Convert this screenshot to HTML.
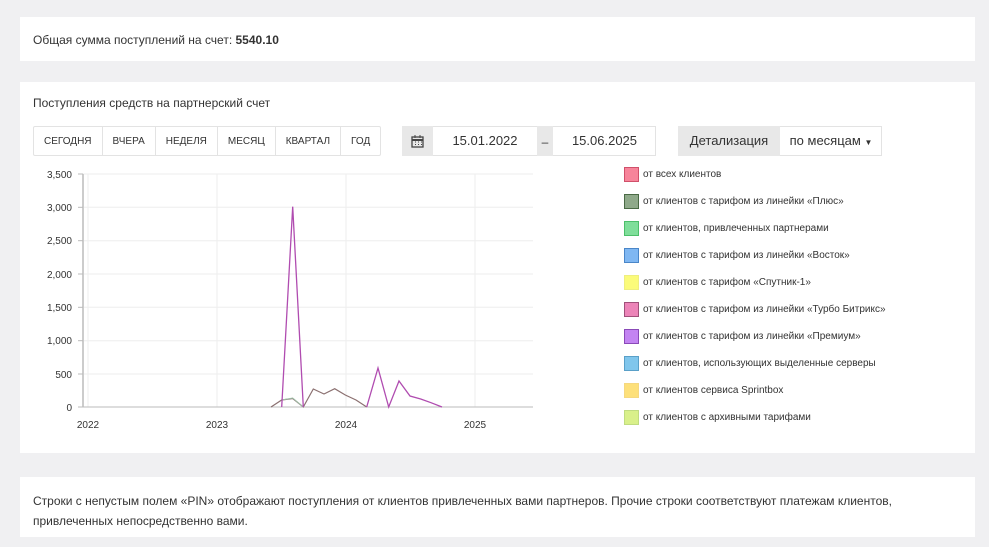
<!DOCTYPE html>
<html><head><meta charset="utf-8"><style>
*{box-sizing:border-box;margin:0;padding:0}
body{width:989px;height:547px;background:#f0f0f2;font-family:"Liberation Sans",sans-serif;color:#333;position:relative;overflow:hidden;font-size:12px}
.card{position:absolute;left:20px;width:955px;background:#fff}
.abs{position:absolute}
.btns{position:absolute;left:33px;top:126px;height:30px;display:flex;border:1px solid #e3e3e3;border-radius:2px}
.btns div{font-size:10px;padding:0 10px;line-height:29px;border-right:1px solid #e3e3e3;color:#333}
.btns div:last-child{border-right:none}
.leg{position:absolute;left:624px;font-size:10px;color:#333;line-height:16px}
.leg span{display:inline-block;width:15px;height:15px;vertical-align:middle;margin-right:4px;border:1px solid}
</style></head><body>
<div class="card" style="top:17px;height:44px"><div class="abs" style="left:13px;top:16px;font-size:12px">Общая сумма поступлений на счет: <b>5540.10</b></div></div>
<div class="card" style="top:82px;height:371px"><div class="abs" style="left:13px;top:14px;font-size:12px">Поступления средств на партнерский счет</div></div>
<div class="card" style="top:477px;height:60px"><div class="abs" style="left:13px;top:14px;font-size:12px;line-height:20px;width:930px">Строки с непустым полем «PIN» отображают поступления от клиентов привлеченных вами партнеров. Прочие строки соответствуют платежам клиентов, привлеченных непосредственно вами.</div></div>

<div class="btns"><div>СЕГОДНЯ</div><div>ВЧЕРА</div><div>НЕДЕЛЯ</div><div>МЕСЯЦ</div><div>КВАРТАЛ</div><div>ГОД</div></div>

<div class="abs" style="left:402px;top:126px;width:254px;height:30px;border:1px solid #e3e3e3;background:#fff"></div>
<div class="abs" style="left:402px;top:126px;width:31px;height:30px;background:#e8e8e8"><svg width="31" height="30"><rect x="10" y="11" width="11" height="10" fill="none" stroke="#444" stroke-width="1.3"/><line x1="10" y1="14" x2="21" y2="14" stroke="#444" stroke-width="2"/><path d="M13 16h1M16 16h1M19 16h1M13 18.5h1M16 18.5h1M19 18.5h1" stroke="#444"/><path d="M13 9v3M18 9v3" stroke="#444"/></svg></div>
<div class="abs" style="left:433px;top:133px;width:104px;text-align:center;font-size:13px">15.01.2022</div>
<div class="abs" style="left:537px;top:126px;width:16px;height:30px;background:#e8e8e8;text-align:center;line-height:32px">–</div>
<div class="abs" style="left:553px;top:133px;width:103px;text-align:center;font-size:13px">15.06.2025</div>

<div class="abs" style="left:678px;top:126px;width:204px;height:30px;border:1px solid #e3e3e3"></div>
<div class="abs" style="left:678px;top:126px;width:102px;height:30px;background:#e8e8e8;text-align:center;line-height:30px;font-size:13px">Детализация</div>
<div class="abs" style="left:780px;top:126px;width:102px;height:30px;text-align:center;line-height:30px;font-size:13px">по месяцам <span style="font-size:8px">▼</span></div>

<svg class="abs" style="left:0;top:0" width="560" height="440" font-family="Liberation Sans" font-size="10" fill="#333">
<g stroke="#eee" stroke-width="1">
<line x1="83" y1="174" x2="533" y2="174"/><line x1="83" y1="207.3" x2="533" y2="207.3"/><line x1="83" y1="240.7" x2="533" y2="240.7"/><line x1="83" y1="274" x2="533" y2="274"/><line x1="83" y1="307.3" x2="533" y2="307.3"/><line x1="83" y1="340.7" x2="533" y2="340.7"/><line x1="83" y1="374" x2="533" y2="374"/>
<line x1="88" y1="174" x2="88" y2="407"/><line x1="217" y1="174" x2="217" y2="407"/><line x1="346" y1="174" x2="346" y2="407"/><line x1="475" y1="174" x2="475" y2="407"/>
</g>
<line x1="83" y1="174" x2="83" y2="407" stroke="#ccc" stroke-width="2"/>
<line x1="83" y1="407" x2="533" y2="407" stroke="#bbb"/>
<g stroke="#bbb"><line x1="78" y1="174" x2="83" y2="174"/><line x1="78" y1="207.3" x2="83" y2="207.3"/><line x1="78" y1="240.7" x2="83" y2="240.7"/><line x1="78" y1="274" x2="83" y2="274"/><line x1="78" y1="307.3" x2="83" y2="307.3"/><line x1="78" y1="340.7" x2="83" y2="340.7"/><line x1="78" y1="374" x2="83" y2="374"/><line x1="78" y1="407" x2="83" y2="407"/></g>
<g text-anchor="end"><text x="72" y="178">3,500</text><text x="72" y="211">3,000</text><text x="72" y="244">2,500</text><text x="72" y="278">2,000</text><text x="72" y="311">1,500</text><text x="72" y="344">1,000</text><text x="72" y="378">500</text><text x="72" y="411">0</text></g>
<g text-anchor="middle"><text x="88" y="428">2022</text><text x="217" y="428">2023</text><text x="346" y="428">2024</text><text x="475" y="428">2025</text></g>
<polyline fill="none" stroke="#8b7070" stroke-width="1.2" points="271,407 281.7,400 292.7,398.5 303.3,407 313.3,389 324,394 334.7,388.7 345.3,395 356,400 366.7,407"/>
<polyline fill="none" stroke="#9fc0a8" stroke-width="1" points="281.7,400 292.7,398 303.3,407"/>
<polyline fill="none" stroke="#b04cb0" stroke-width="1.3" points="281.7,407 292.7,206.7 303.3,407"/>
<polyline fill="none" stroke="#b04cb0" stroke-width="1.3" points="366.7,407 378,368 388.7,407 399,381 410,396 420.7,399 431,402.7 442,407"/>
</svg>

<div class="leg" style="top:167px"><span style="background:#f7849a;border-color:#d0506a"></span>от всех клиентов</div>
<div class="leg" style="top:194px"><span style="background:#8fa98a;border-color:#4a6a45"></span>от клиентов с тарифом из линейки «Плюс»</div>
<div class="leg" style="top:221px"><span style="background:#7fde9a;border-color:#4cbf6a"></span>от клиентов, привлеченных партнерами</div>
<div class="leg" style="top:248px"><span style="background:#7fb7f2;border-color:#4a86c8"></span>от клиентов с тарифом из линейки «Восток»</div>
<div class="leg" style="top:275px"><span style="background:#fbfb7a;border-color:#eeee80"></span>от клиентов с тарифом «Спутник-1»</div>
<div class="leg" style="top:302px"><span style="background:#ec84b8;border-color:#a0507a"></span>от клиентов с тарифом из линейки «Турбо Битрикс»</div>
<div class="leg" style="top:329px"><span style="background:#c384f2;border-color:#8a4ab8"></span>от клиентов с тарифом из линейки «Премиум»</div>
<div class="leg" style="top:356px"><span style="background:#80c6ec;border-color:#5aa0c8"></span>от клиентов, использующих выделенные серверы</div>
<div class="leg" style="top:383px"><span style="background:#fde07a;border-color:#f5d880"></span>от клиентов сервиса Sprintbox</div>
<div class="leg" style="top:410px"><span style="background:#d9f08a;border-color:#c0dc80"></span>от клиентов с архивными тарифами</div>
</body></html>
